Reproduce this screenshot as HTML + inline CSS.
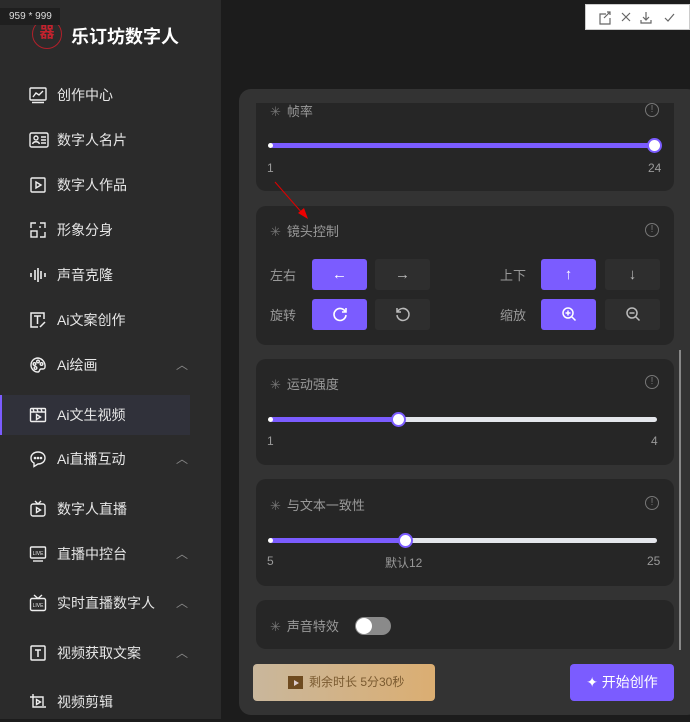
<!DOCTYPE html>
<html><head><meta charset="utf-8"><style>
*{margin:0;padding:0;box-sizing:border-box}
body{width:690px;height:719px;background:#1c1c1c;position:relative;overflow:hidden;font-family:"Liberation Sans","Noto Sans CJK SC",sans-serif;}
.abs{position:absolute}
#side{left:0;top:0;width:221px;height:719px;background:#2b2b2b}
.mi{position:absolute;left:0;width:190px;height:40px;color:#e6e6e6;font-size:14px;line-height:40px;padding-left:57px}
.mi svg{position:absolute;left:29px;top:11px}
.mi .ch{position:absolute;left:176px;top:0;color:#888;font-size:12px}
.act{background:#30313a;border-left:2px solid #7b5cff;padding-left:55px}
.act svg{left:27px}
#panel{left:239px;top:89px;width:460px;height:626px;background:#333;border-radius:12px}
.card{position:absolute;left:256px;width:418px;background:#262626;border-radius:10px}
.ttl{position:absolute;left:270px;color:#999;font-size:13px}
.ttl b{font-weight:normal;color:#777;margin-right:6px}
.info{position:absolute;left:645px;width:14px;height:14px;border:1.3px solid #777;border-radius:50%;color:#777;font-size:10px;line-height:12px;text-align:center}
.track{position:absolute;left:270px;width:387px;height:5px;background:#e4e6eb;border-radius:3px}
.fill{position:absolute;left:0;top:0;height:5px;background:#7b5cff;border-radius:3px}
.thumb{position:absolute;width:15px;height:15px;border-radius:50%;background:#fff;border:2px solid #7b5cff;top:-5px}
.dot{position:absolute;left:-2px;top:0;width:5px;height:5px;border-radius:50%;background:#fff}
.lbl{position:absolute;color:#999;font-size:12px}
.btn{position:absolute;width:55px;height:31px;border-radius:3px;background:#2e2e2e;color:#bbb;text-align:center;line-height:31px;font-size:15px;font-weight:bold}
.p{background:#7b5cff;color:#fff}
.btn svg{margin-top:7px}
</style></head><body>
<div id="side" class="abs">
<div class="abs" style="left:32px;top:19px;width:30px;height:30px;border-radius:50%;border:1.5px solid #b0202a;color:#c3222d;font-size:15px;text-align:center;line-height:26px;font-weight:bold">器</div>
<div class="abs" style="left:71px;top:23px;color:#fff;font-size:18px;font-weight:bold">乐订坊数字人</div>
<div class="abs" style="left:0;top:8px;width:60px;height:17px;background:#1f1f1f;color:#ddd;font-size:10px;line-height:17px;padding-left:9px">959 * 999</div>

<div class="mi" style="top:75px"><svg width="18" height="18" viewBox="0 0 18 18" fill="none" stroke="#eee" stroke-width="1.4"><rect x="1" y="2" width="16" height="12" rx="1"/><path d="M4 11l3-4 3 2 4-4M3 16.5h12"/></svg>创作中心</div>
<div class="mi" style="top:120px"><svg width="20" height="18" viewBox="0 0 20 18" fill="none" stroke="#eee" stroke-width="1.4"><rect x="1" y="2" width="18" height="14" rx="1.5"/><circle cx="7" cy="7" r="2"/><path d="M3.5 13c1-3 6-3 7 0M12 6h5M12 9h5M12 12h5"/></svg>数字人名片</div>
<div class="mi" style="top:165px"><svg width="18" height="18" viewBox="0 0 18 18" fill="none" stroke="#eee" stroke-width="1.4"><rect x="2" y="2" width="14" height="14" rx="1"/><path d="M7 6v6l5-3z"/></svg>数字人作品</div>
<div class="mi" style="top:210px"><svg width="18" height="18" viewBox="0 0 18 18" fill="none" stroke="#eee" stroke-width="1.4"><rect x="2" y="10" width="6" height="6"/><path d="M2 7V2h5M11 2h5v5M16 11v5h-5M11 7V5"/></svg>形象分身</div>
<div class="mi" style="top:255px"><svg width="18" height="18" viewBox="0 0 18 18" fill="none" stroke="#eee" stroke-width="1.6"><path d="M2 7v4M6 4v10M9 2v14M12 5v8M16 7v4"/></svg>声音克隆</div>
<div class="mi" style="top:300px"><svg width="18" height="18" viewBox="0 0 18 18" fill="none" stroke="#eee" stroke-width="1.5"><path d="M15 8V2H2v14h7"/><path d="M5 5h7M8.5 5v8M11 16l5-5"/></svg>Ai文案创作</div>
<div class="mi" style="top:345px"><svg width="18" height="18" viewBox="0 0 18 18" fill="none" stroke="#eee" stroke-width="1.4"><path d="M9 2a7 7 0 1 0 0 14c2 0 1-3 3-3h2a2 2 0 0 0 2-2A8 8 0 0 0 9 2z"/><circle cx="5.5" cy="8" r="1.3"/><circle cx="9" cy="5.5" r="1.3"/><circle cx="12.5" cy="8" r="1.3"/><circle cx="6.5" cy="12" r="1.3"/></svg>Ai绘画<span class="ch">︿</span></div>
<div class="mi act" style="top:395px"><svg width="18" height="18" viewBox="0 0 18 18" fill="none" stroke="#eee" stroke-width="1.4"><rect x="1.5" y="2.5" width="15" height="13" rx="1"/><path d="M1.5 6h15M4 2.5l1 3.5M8 2.5l1 3.5M12 2.5l1 3.5M7.5 8.5v5l4-2.5z"/></svg>Ai文生视频</div>
<div class="mi" style="top:439px"><svg width="18" height="18" viewBox="0 0 18 18" fill="none" stroke="#eee" stroke-width="1.4"><path d="M9 2c4 0 7 2.5 7 6s-3 6-7 6l-4 2.5V13C3 12 2 10 2 8c0-3.5 3-6 7-6z"/><circle cx="6" cy="8" r=".6" fill="#eee"/><circle cx="9" cy="8" r=".6" fill="#eee"/><circle cx="12" cy="8" r=".6" fill="#eee"/></svg>Ai直播互动<span class="ch">︿</span></div>
<div class="mi" style="top:489px"><svg width="18" height="18" viewBox="0 0 18 18" fill="none" stroke="#eee" stroke-width="1.4"><rect x="2" y="4" width="14" height="12" rx="2"/><path d="M6 1l3 3 3-3M7.5 7.5v5l4-2.5z"/></svg>数字人直播</div>
<div class="mi" style="top:534px"><svg width="18" height="18" viewBox="0 0 18 18" fill="none" stroke="#eee" stroke-width="1.4"><rect x="1.5" y="2" width="15" height="11" rx="1"/><path d="M4 16h10"/><text x="9" y="10" font-size="5" fill="#eee" stroke="none" text-anchor="middle" font-family="Liberation Sans">LIVE</text></svg>直播中控台<span class="ch">︿</span></div>
<div class="mi" style="top:583px"><svg width="18" height="18" viewBox="0 0 18 18" fill="none" stroke="#eee" stroke-width="1.4"><rect x="1.5" y="4.5" width="15" height="12" rx="1.5"/><path d="M5 1l4 3.5 4-3.5"/><text x="9" y="13" font-size="5" fill="#eee" stroke="none" text-anchor="middle" font-family="Liberation Sans">LIVE</text></svg>实时直播数字人<span class="ch">︿</span></div>
<div class="mi" style="top:633px"><svg width="18" height="18" viewBox="0 0 18 18" fill="none" stroke="#eee" stroke-width="1.5"><rect x="2" y="2" width="14" height="14" rx="1"/><path d="M6 6h6M9 6v7"/></svg>视频获取文案<span class="ch">︿</span></div>
<div class="mi" style="top:682px"><svg width="18" height="18" viewBox="0 0 18 18" fill="none" stroke="#eee" stroke-width="1.4"><path d="M4 1v13h13M1 4h13v9"/><path d="M7.5 6.5v5l4-2.5z"/></svg>视频剪辑</div>
</div>

<div class="abs" style="left:585px;top:4px;width:105px;height:26px;background:#fff;border:1px solid #ccc"><svg width="105" height="26" viewBox="0 0 105 26" fill="none" stroke="#666" stroke-width="1.2"><path d="M20 9h-6v10h10v-6M18 13l6-6M21 7h3v3"/><path d="M36 8l8 8M44 8l-8 8"/><path d="M60 7v8M57 12l3 3 3-3M55 15v3h10v-3"/><path d="M79 13l3 3 6-7"/></svg></div>

<div id="panel" class="abs"></div>
<div class="abs" style="left:679px;top:350px;width:2px;height:300px;background:#888"></div>

<div class="card" style="top:103px;height:88px;border-radius:0 0 10px 10px"></div>
<div class="ttl" style="top:101px"><b>✳</b>帧率</div>
<div class="info" style="top:103px">!</div>
<div class="track" style="top:143px;background:#7b5cff"><div class="dot"></div><div class="thumb" style="left:377px"></div></div>
<div class="lbl" style="left:267px;top:161px">1</div>
<div class="lbl" style="left:648px;top:161px">24</div>

<div class="card" style="top:206px;height:139px"></div>
<svg class="abs" style="left:270px;top:175px" width="45" height="50"><path d="M5 7L33 39" stroke="#d00" stroke-width="1"/><path d="M28 38l10 6-4-11z" fill="#e00"/></svg>
<div class="ttl" style="top:221px"><b>✳</b>镜头控制</div>
<div class="info" style="top:223px">!</div>
<div class="lbl" style="left:270px;top:265px;font-size:13px">左右</div>
<div class="lbl" style="left:500px;top:265px;font-size:13px">上下</div>
<div class="lbl" style="left:270px;top:305px;font-size:13px">旋转</div>
<div class="lbl" style="left:500px;top:305px;font-size:13px">缩放</div>
<div class="btn p" style="left:312px;top:259px">←</div>
<div class="btn" style="left:375px;top:259px">→</div>
<div class="btn p" style="left:541px;top:259px">↑</div>
<div class="btn" style="left:605px;top:259px">↓</div>
<div class="btn p" style="left:312px;top:299px"><svg width="16" height="16" viewBox="0 0 16 16" fill="none" stroke="#fff" stroke-width="1.6"><path d="M13.5 6A6 6 0 1 0 14 9"/><path d="M14 2v4h-4"/></svg></div>
<div class="btn" style="left:375px;top:299px"><svg width="16" height="16" viewBox="0 0 16 16" fill="none" stroke="#bbb" stroke-width="1.5"><path d="M2.5 6A6 6 0 1 1 2 9"/><path d="M2 2v4h4"/></svg></div>
<div class="btn p" style="left:541px;top:299px"><svg width="16" height="16" viewBox="0 0 16 16" fill="none" stroke="#fff" stroke-width="1.5"><circle cx="7" cy="7" r="5"/><path d="M11 11l3.5 3.5M7 4.5v5M4.5 7h5"/></svg></div>
<div class="btn" style="left:605px;top:299px"><svg width="16" height="16" viewBox="0 0 16 16" fill="none" stroke="#bbb" stroke-width="1.5"><circle cx="7" cy="7" r="5"/><path d="M11 11l3.5 3.5M4.5 7h5"/></svg></div>

<div class="card" style="top:359px;height:106px"></div>
<div class="ttl" style="top:374px"><b>✳</b>运动强度</div>
<div class="info" style="top:375px">!</div>
<div class="track" style="top:417px"><div class="fill" style="width:128px"></div><div class="dot"></div><div class="thumb" style="left:121px"></div></div>
<div class="lbl" style="left:267px;top:434px">1</div>
<div class="lbl" style="left:651px;top:434px">4</div>

<div class="card" style="top:479px;height:107px"></div>
<div class="ttl" style="top:495px"><b>✳</b>与文本一致性</div>
<div class="info" style="top:496px">!</div>
<div class="track" style="top:538px"><div class="fill" style="width:135px"></div><div class="dot"></div><div class="thumb" style="left:128px"></div></div>
<div class="lbl" style="left:267px;top:554px">5</div>
<div class="lbl" style="left:385px;top:554px">默认12</div>
<div class="lbl" style="left:647px;top:554px">25</div>

<div class="card" style="top:600px;height:49px"></div>
<div class="ttl" style="top:616px"><b>✳</b>声音特效</div>
<div class="abs" style="left:355px;top:617px;width:36px;height:18px;border-radius:9px;background:#8a8a8a"><div class="abs" style="left:1px;top:1px;width:16px;height:16px;border-radius:50%;background:#fff"></div></div>

<div class="abs" style="left:253px;top:664px;width:182px;height:37px;border-radius:4px;background:linear-gradient(90deg,#c9b79c,#dbae72);color:#7a5a30;font-size:12px;line-height:37px;padding-left:35px"><svg style="vertical-align:-3px;margin-right:6px" width="15" height="14" viewBox="0 0 15 14"><rect x="0" y="1" width="15" height="13" fill="#6e4a1f"/><path d="M6 5v6l5-3z" fill="#dcc"/></svg>剩余时长 5分30秒</div>
<div class="abs" style="left:570px;top:664px;width:104px;height:37px;border-radius:4px;background:#7b5cff;color:#fff;font-size:14px;line-height:37px;text-align:center">✦ 开始创作</div>
</body></html>
